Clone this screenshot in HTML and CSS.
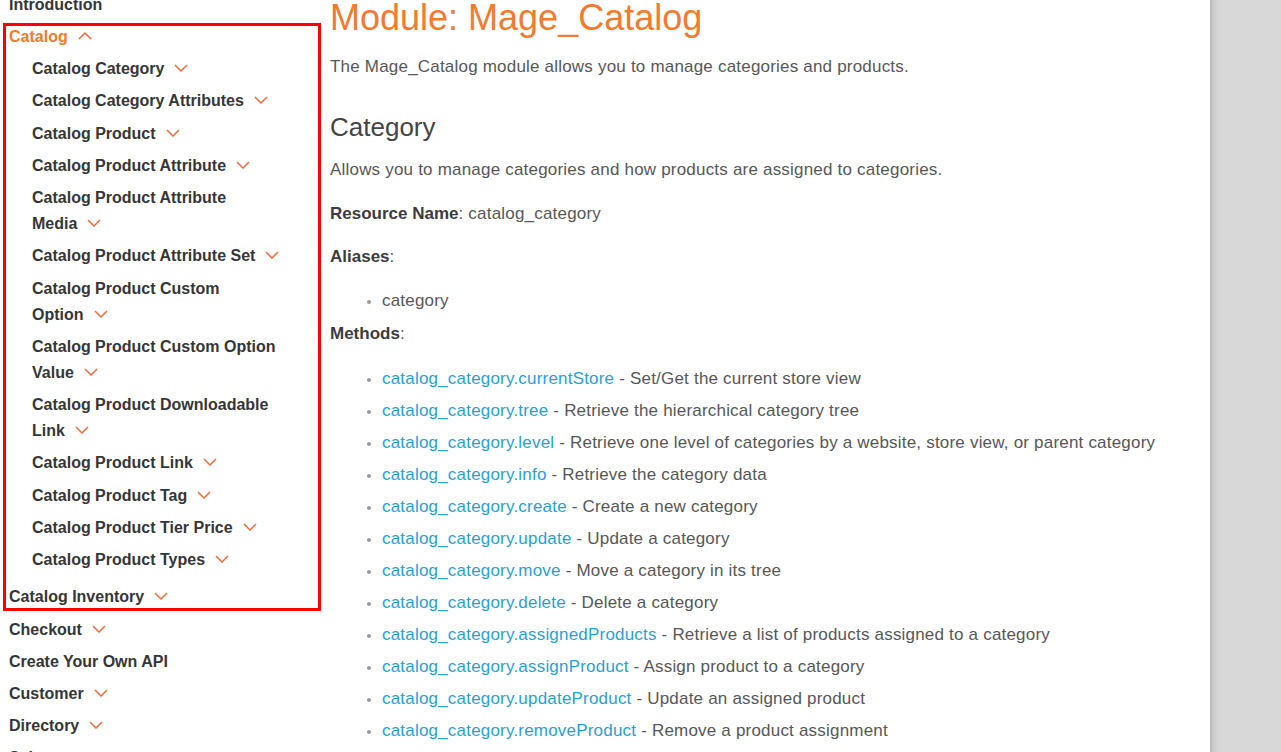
FILE: index.html
```html
<!DOCTYPE html>
<html lang="en">
<head>
<meta charset="utf-8">
<title>Module: Mage_Catalog</title>
<link rel="stylesheet" href="styles.css">
</head>
<body>
<div class="page">
  <div class="doc">
    <nav class="sidebar">
      <ul class="nav">
        <li class="nav-item">Introduction</li>
      </ul>
      <div class="highlight">
        <ul class="nav">
          <li class="nav-item active"><span class="nw">Catalog<svg class="chev" viewBox="0 0 14 8"><polyline points="1,7 7,1 13,7"/></svg></span>
            <ul class="subnav">
              <li class="nav-item">Catalog <span class="nw">Category<svg class="chev" viewBox="0 0 14 8"><polyline points="1,1 7,7 13,1"/></svg></span></li>
              <li class="nav-item">Catalog Category <span class="nw">Attributes<svg class="chev" viewBox="0 0 14 8"><polyline points="1,1 7,7 13,1"/></svg></span></li>
              <li class="nav-item">Catalog <span class="nw">Product<svg class="chev" viewBox="0 0 14 8"><polyline points="1,1 7,7 13,1"/></svg></span></li>
              <li class="nav-item">Catalog Product <span class="nw">Attribute<svg class="chev" viewBox="0 0 14 8"><polyline points="1,1 7,7 13,1"/></svg></span></li>
              <li class="nav-item">Catalog Product Attribute <span class="nw">Media<svg class="chev" viewBox="0 0 14 8"><polyline points="1,1 7,7 13,1"/></svg></span></li>
              <li class="nav-item">Catalog Product Attribute <span class="nw">Set<svg class="chev" viewBox="0 0 14 8"><polyline points="1,1 7,7 13,1"/></svg></span></li>
              <li class="nav-item">Catalog Product Custom <span class="nw">Option<svg class="chev" viewBox="0 0 14 8"><polyline points="1,1 7,7 13,1"/></svg></span></li>
              <li class="nav-item">Catalog Product Custom Option <span class="nw">Value<svg class="chev" viewBox="0 0 14 8"><polyline points="1,1 7,7 13,1"/></svg></span></li>
              <li class="nav-item">Catalog Product Downloadable <span class="nw">Link<svg class="chev" viewBox="0 0 14 8"><polyline points="1,1 7,7 13,1"/></svg></span></li>
              <li class="nav-item">Catalog Product <span class="nw">Link<svg class="chev" viewBox="0 0 14 8"><polyline points="1,1 7,7 13,1"/></svg></span></li>
              <li class="nav-item">Catalog Product <span class="nw">Tag<svg class="chev" viewBox="0 0 14 8"><polyline points="1,1 7,7 13,1"/></svg></span></li>
              <li class="nav-item">Catalog Product Tier <span class="nw">Price<svg class="chev" viewBox="0 0 14 8"><polyline points="1,1 7,7 13,1"/></svg></span></li>
              <li class="nav-item">Catalog Product <span class="nw">Types<svg class="chev" viewBox="0 0 14 8"><polyline points="1,1 7,7 13,1"/></svg></span></li>
            </ul>
          </li>
          <li class="nav-item last">Catalog <span class="nw">Inventory<svg class="chev" viewBox="0 0 14 8"><polyline points="1,1 7,7 13,1"/></svg></span></li>
        </ul>
      </div>
      <ul class="nav">
        <li class="nav-item"><span class="nw">Checkout<svg class="chev" viewBox="0 0 14 8"><polyline points="1,1 7,7 13,1"/></svg></span></li>
        <li class="nav-item">Create Your Own API</li>
        <li class="nav-item"><span class="nw">Customer<svg class="chev" viewBox="0 0 14 8"><polyline points="1,1 7,7 13,1"/></svg></span></li>
        <li class="nav-item"><span class="nw">Directory<svg class="chev" viewBox="0 0 14 8"><polyline points="1,1 7,7 13,1"/></svg></span></li>
        <li class="nav-item"><span class="nw">Sales<svg class="chev" viewBox="0 0 14 8"><polyline points="1,1 7,7 13,1"/></svg></span></li>
      </ul>
    </nav>

    <main class="content">
      <h1 class="title">Module: Mage_Catalog</h1>
      <p class="text intro">The Mage_Catalog module allows you to manage categories and products.</p>

      <h2 class="section">Category</h2>
      <p class="text">Allows you to manage categories and how products are assigned to categories.</p>
      <p class="text tight"><strong>Resource Name</strong>: catalog_category</p>
      <p class="text"><strong>Aliases</strong>:</p>
      <ul class="list">
        <li>category</li>
      </ul>
      <p class="text loose"><strong>Methods</strong>:</p>
      <ul class="list">
        <li><a href="#">catalog_category.currentStore</a> - Set/Get the current store view</li>
        <li><a href="#">catalog_category.tree</a> - Retrieve the hierarchical category tree</li>
        <li><a href="#">catalog_category.level</a> - Retrieve one level of categories by a website, store view, or parent category</li>
        <li><a href="#">catalog_category.info</a> - Retrieve the category data</li>
        <li><a href="#">catalog_category.create</a> - Create a new category</li>
        <li><a href="#">catalog_category.update</a> - Update a category</li>
        <li><a href="#">catalog_category.move</a> - Move a category in its tree</li>
        <li><a href="#">catalog_category.delete</a> - Delete a category</li>
        <li><a href="#">catalog_category.assignedProducts</a> - Retrieve a list of products assigned to a category</li>
        <li><a href="#">catalog_category.assignProduct</a> - Assign product to a category</li>
        <li><a href="#">catalog_category.updateProduct</a> - Update an assigned product</li>
        <li><a href="#">catalog_category.removeProduct</a> - Remove a product assignment</li>
      </ul>
    </main>
  </div>
  <div class="gutter"></div>
</div>
</body>
</html>
```

FILE: styles.css
```css
html, body {
  margin: 0;
  padding: 0;
  height: 752px;
  overflow: hidden;
  background: #ffffff;
}

body {
  font-family: "Liberation Sans", Arial, Helvetica, sans-serif;
  color: #575757;
}

.page {
  display: flex;
  height: 752px;
}

.doc {
  width: 1210px;
  flex: 0 0 1210px;
  display: flex;
  background: #ffffff;
}

.gutter {
  flex: 1;
  background: linear-gradient(to right, #b9b9b9 0px, #cdcdcd 4px, #d6d6d6 9px, #d8d8d8 14px);
}

/* Sidebar */
.sidebar {
  width: 320px;
  flex: 0 0 320px;
  margin-top: -8px;
}

.nav, .subnav {
  list-style: none;
  margin: 0;
  padding: 0;
}

.sidebar > .nav {
  padding-left: 9px;
}

.nav-item {
  font-weight: bold;
  font-size: 16px;
  line-height: 26px;
  color: #363636;
  margin-bottom: 6px;
}

.nw {
  white-space: nowrap;
}

.nav-item.last {
  margin-bottom: 7px;
}

.nav-item.active {
  color: #f47a2e;
}

.subnav {
  padding-left: 23px;
  padding-right: 28px;
  margin-top: 6px;
  margin-bottom: 11px;
}

.subnav .nav-item {
  color: #363636;
  margin-bottom: 6.25px;
}

.highlight {
  margin-left: 4px;
  width: 316px;
  padding-left: 5px;
  padding-right: 2px;
  box-sizing: border-box;
  outline: 3px solid #ff0000;
  outline-offset: -2px;
}

.chev {
  width: 14px;
  height: 8px;
  margin-left: 10px;
  vertical-align: 2px;
  fill: none;
  stroke: #f26a3a;
  stroke-width: 1.5;
}

/* Content */
.content {
  flex: 1;
  padding-left: 10px;
  padding-right: 20px;
}

.title {
  font-size: 36px;
  font-weight: normal;
  line-height: 40px;
  color: #f47a2e;
  margin: -2px 0 17px 0;
}

.section {
  font-size: 26px;
  font-weight: normal;
  line-height: 32px;
  color: #454545;
  margin: 0 0 15px 0;
}

.text {
  font-size: 17px;
  letter-spacing: 0.2px;
  line-height: 24px;
  margin: 0 0 20px 0;
}

.text.intro {
  margin-bottom: 32px;
}

.text.tight {
  margin-bottom: 19px;
}

.text.loose {
  margin-bottom: 21px;
}

.text strong {
  color: #3c3c3c;
  letter-spacing: 0;
}

.list {
  margin: 0 0 9px 0;
  padding-left: 52px;
  font-size: 17px;
  letter-spacing: 0.2px;
  line-height: 24px;
}

.list li {
  margin-bottom: 8px;
}

.list li::marker {
  color: #9a9a9a;
  font-size: 14px;
}

.list a {
  color: #2a9fd6;
  text-decoration: none;
}
```
